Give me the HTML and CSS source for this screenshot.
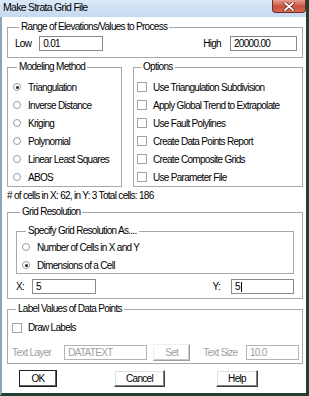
FILE: index.html
```html
<!DOCTYPE html>
<html lang="en">
<head>
  <meta charset="UTF-8">
  <title>Make Strata Grid File</title>
  <link rel="stylesheet" href="styles.css">
</head>
<body>
  <div class="window">
    <!-- Barra del titolo -->
    <div class="titlebar">
      <span class="title">Make Strata Grid File</span>
      <span class="close">
        <svg width="12" height="9" viewBox="0 0 12 9">
          <path d="M2 1 L10 8 M10 1 L2 8" stroke="#5a2020" stroke-width="3.2" stroke-linecap="round"/>
          <path d="M2 1 L10 8 M10 1 L2 8" stroke="#ffffff" stroke-width="1.8" stroke-linecap="round"/>
        </svg>
      </span>
    </div>

    <div class="dialog">
      <fieldset class="group range">
        <legend>Range of Elevations/Values to Process</legend>
        <div class="row">
          <span class="lbl">Low</span>
          <span class="field low">0.01</span>
          <span class="lbl high-lbl">High</span>
          <span class="field high">20000.00</span>
        </div>
      </fieldset>

      <div class="split">
        <fieldset class="group method">
          <legend>Modeling Method</legend>
          <div class="opt"><span class="radio checked"></span>Triangulation</div>
          <div class="opt"><span class="radio"></span>Inverse Distance</div>
          <div class="opt"><span class="radio"></span>Kriging</div>
          <div class="opt"><span class="radio"></span>Polynomial</div>
          <div class="opt"><span class="radio"></span>Linear Least Squares</div>
          <div class="opt"><span class="radio"></span>ABOS</div>
        </fieldset>
        <fieldset class="group options">
          <legend>Options</legend>
          <div class="opt"><span class="check"></span>Use Triangulation Subdivision</div>
          <div class="opt"><span class="check"></span>Apply Global Trend to Extrapolate</div>
          <div class="opt"><span class="check"></span>Use Fault Polylines</div>
          <div class="opt"><span class="check"></span>Create Data Points Report</div>
          <div class="opt"><span class="check"></span>Create Composite Grids</div>
          <div class="opt"><span class="check"></span>Use Parameter File</div>
        </fieldset>
      </div>

      <div class="cells"># of cells in X: 62, in Y: 3 Total cells: 186</div>

      <fieldset class="group grid">
        <legend>Grid Resolution</legend>
        <fieldset class="group inner">
          <legend>Specify Grid Resolution As....</legend>
          <div class="opt"><span class="radio"></span>Number of Cells in X and Y</div>
          <div class="opt"><span class="radio checked"></span>Dimensions of a Cell</div>
        </fieldset>
        <div class="row xy">
          <span class="lbl">X:</span>
          <span class="field fx">5</span>
          <span class="lbl y-lbl">Y:</span>
          <span class="field fy">5<span class="caret"></span></span>
        </div>
      </fieldset>

      <fieldset class="group labels">
        <legend>Label Values of Data Points</legend>
        <div class="opt"><span class="check"></span>Draw Labels</div>
        <div class="row layer">
          <span class="lbl dim">Text Layer</span>
          <span class="field off layer-f">DATATEXT</span>
          <span class="btn off set">Set</span>
          <span class="lbl dim size-lbl">Text Size</span>
          <span class="field off size-f">10.0</span>
        </div>
      </fieldset>

      <div class="buttons">
        <span class="btn default ok">OK</span>
        <span class="btn cancel">Cancel</span>
        <span class="btn help">Help</span>
      </div>
    </div>
  </div>
</body>
</html>
```

FILE: styles.css
```css
body {
  margin: 0;
  font-family: "Liberation Sans", Arial, sans-serif;
  font-size: 10px;
  letter-spacing: -0.7px;
  color: #000;
  background: #fff;
}
.window {
  width: 309px;
  height: 396px;
  box-sizing: border-box;
  border-left: 2px solid #8ea3b5;
  border-right: 3px solid #22402f;
  border-bottom: 3px solid #22402f;
  background: #fff;
}
.titlebar {
  height: 17px;
  display: flex;
  align-items: flex-start;
  background: linear-gradient(#dce9f7, #c5d9ef);
  margin-left: -2px;
  padding-left: 2px;
}
.title {
  font-size: 10.5px;
  letter-spacing: -0.7px;
  line-height: 15px;
  margin-left: 1px;
}
.close {
  margin-left: auto;
  width: 34px;
  height: 13px;
  border: 1px solid #6b2b2b;
  border-top: none;
  border-radius: 0 0 4px 4px;
  box-sizing: border-box;
  background: linear-gradient(#e6a08f, #c8503e 55%, #d76a52);
  display: flex;
  align-items: center;
  justify-content: center;
}
.dialog {
  padding: 4px 3px 0 5px;
}
.group {
  margin: 0;
  border: 1px solid #a8a8a8;
  padding: 0 5px 0 7px;
  min-width: 0;
}
.group legend {
  padding: 0 2px;
  margin-left: 4px;
  line-height: 12px;
}
.row {
  display: flex;
  align-items: center;
}
.field {
  height: 15px;
  box-sizing: border-box;
  border: 1px solid #8a8a8a;
  padding: 0 3px;
  line-height: 13px;
  background: #fff;
  display: flex;
  align-items: center;
}
.field.off {
  border-color: #b4b4b4;
  color: #a0a0a0;
}
.lbl.dim {
  color: #a0a0a0;
}
.range .row {
  margin-top: 3px;
  padding-bottom: 6px;
}
.range .low {
  width: 64px;
  margin-left: 8px;
}
.range .high-lbl {
  margin-left: auto;
  margin-right: 9px;
}
.range .high {
  width: 67px;
}
.split {
  display: flex;
  gap: 11px;
  margin-top: 3px;
}
.method {
  width: 115px;
  box-sizing: border-box;
  padding: 5px 0 0 5px;
}
.options {
  flex: 1;
  padding: 5px 0 0 3px;
}
.opt {
  height: 18px;
  display: flex;
  align-items: center;
}
.radio {
  width: 8px;
  height: 8px;
  border: 1px solid #9a9a9a;
  border-radius: 50%;
  margin-right: 7px;
  box-sizing: border-box;
  position: relative;
  flex: none;
}
.radio.checked::after {
  content: "";
  position: absolute;
  left: 1.5px;
  top: 1.5px;
  width: 3px;
  height: 3px;
  border-radius: 50%;
  background: #222;
}
.check {
  width: 10px;
  height: 10px;
  border: 1px solid #a4a4a4;
  box-sizing: border-box;
  margin-right: 6px;
  flex: none;
}
.cells {
  margin-top: 3px;
  line-height: 12px;
}
.grid {
  margin-top: 4px;
  padding: 0 8px 4px 8px;
}
.grid .inner {
  margin-top: 7px;
  padding: 2px 0 0 5px;
}
.inner .opt {
  height: 16px;
  margin-bottom: 2px;
}
.inner .opt:last-child {
  margin-bottom: 0;
}
.xy {
  margin-top: 5px;
}
.xy .fx {
  width: 64px;
  margin-left: 8px;
}
.xy .y-lbl {
  margin-left: auto;
  margin-right: 11px;
}
.xy .fy {
  width: 63px;
}
.caret {
  width: 1px;
  height: 10px;
  background: #000;
  margin-left: 1px;
}
.labels {
  margin-top: 4px;
  padding: 4px 3px 2px 4px;
}
.labels .opt {
  height: 17px;
}
.layer {
  margin-top: 8px;
}
.layer-f {
  width: 83px;
  margin-left: 13px;
}
.btn {
  height: 17px;
  box-sizing: border-box;
  display: flex;
  align-items: center;
  justify-content: center;
  border: 1px solid;
  border-color: #ffffff #404040 #404040 #ffffff;
  box-shadow: inset -1px -1px #808080, inset 1px 1px #e0e0e0;
  background: #fff;
}
.btn.off {
  color: #a0a0a0;
  border-color: #f0f0f0 #a0a0a0 #a0a0a0 #f0f0f0;
  box-shadow: inset -1px -1px #c8c8c8;
}
.set {
  width: 37px;
  margin-left: 6px;
}
.size-lbl {
  margin-left: 13px;
}
.size-f {
  width: 53px;
  margin-left: auto;
}
.buttons {
  display: flex;
  margin-top: 6px;
  padding-left: 12px;
}
.btn.default {
  border: 1px solid #202020;
  box-shadow: inset -1px -1px #606060, inset 1px 1px #fff;
}
.ok {
  width: 38px;
}
.cancel {
  width: 51px;
  margin-left: 57px;
}
.help {
  width: 42px;
  margin-left: 51px;
}
```
